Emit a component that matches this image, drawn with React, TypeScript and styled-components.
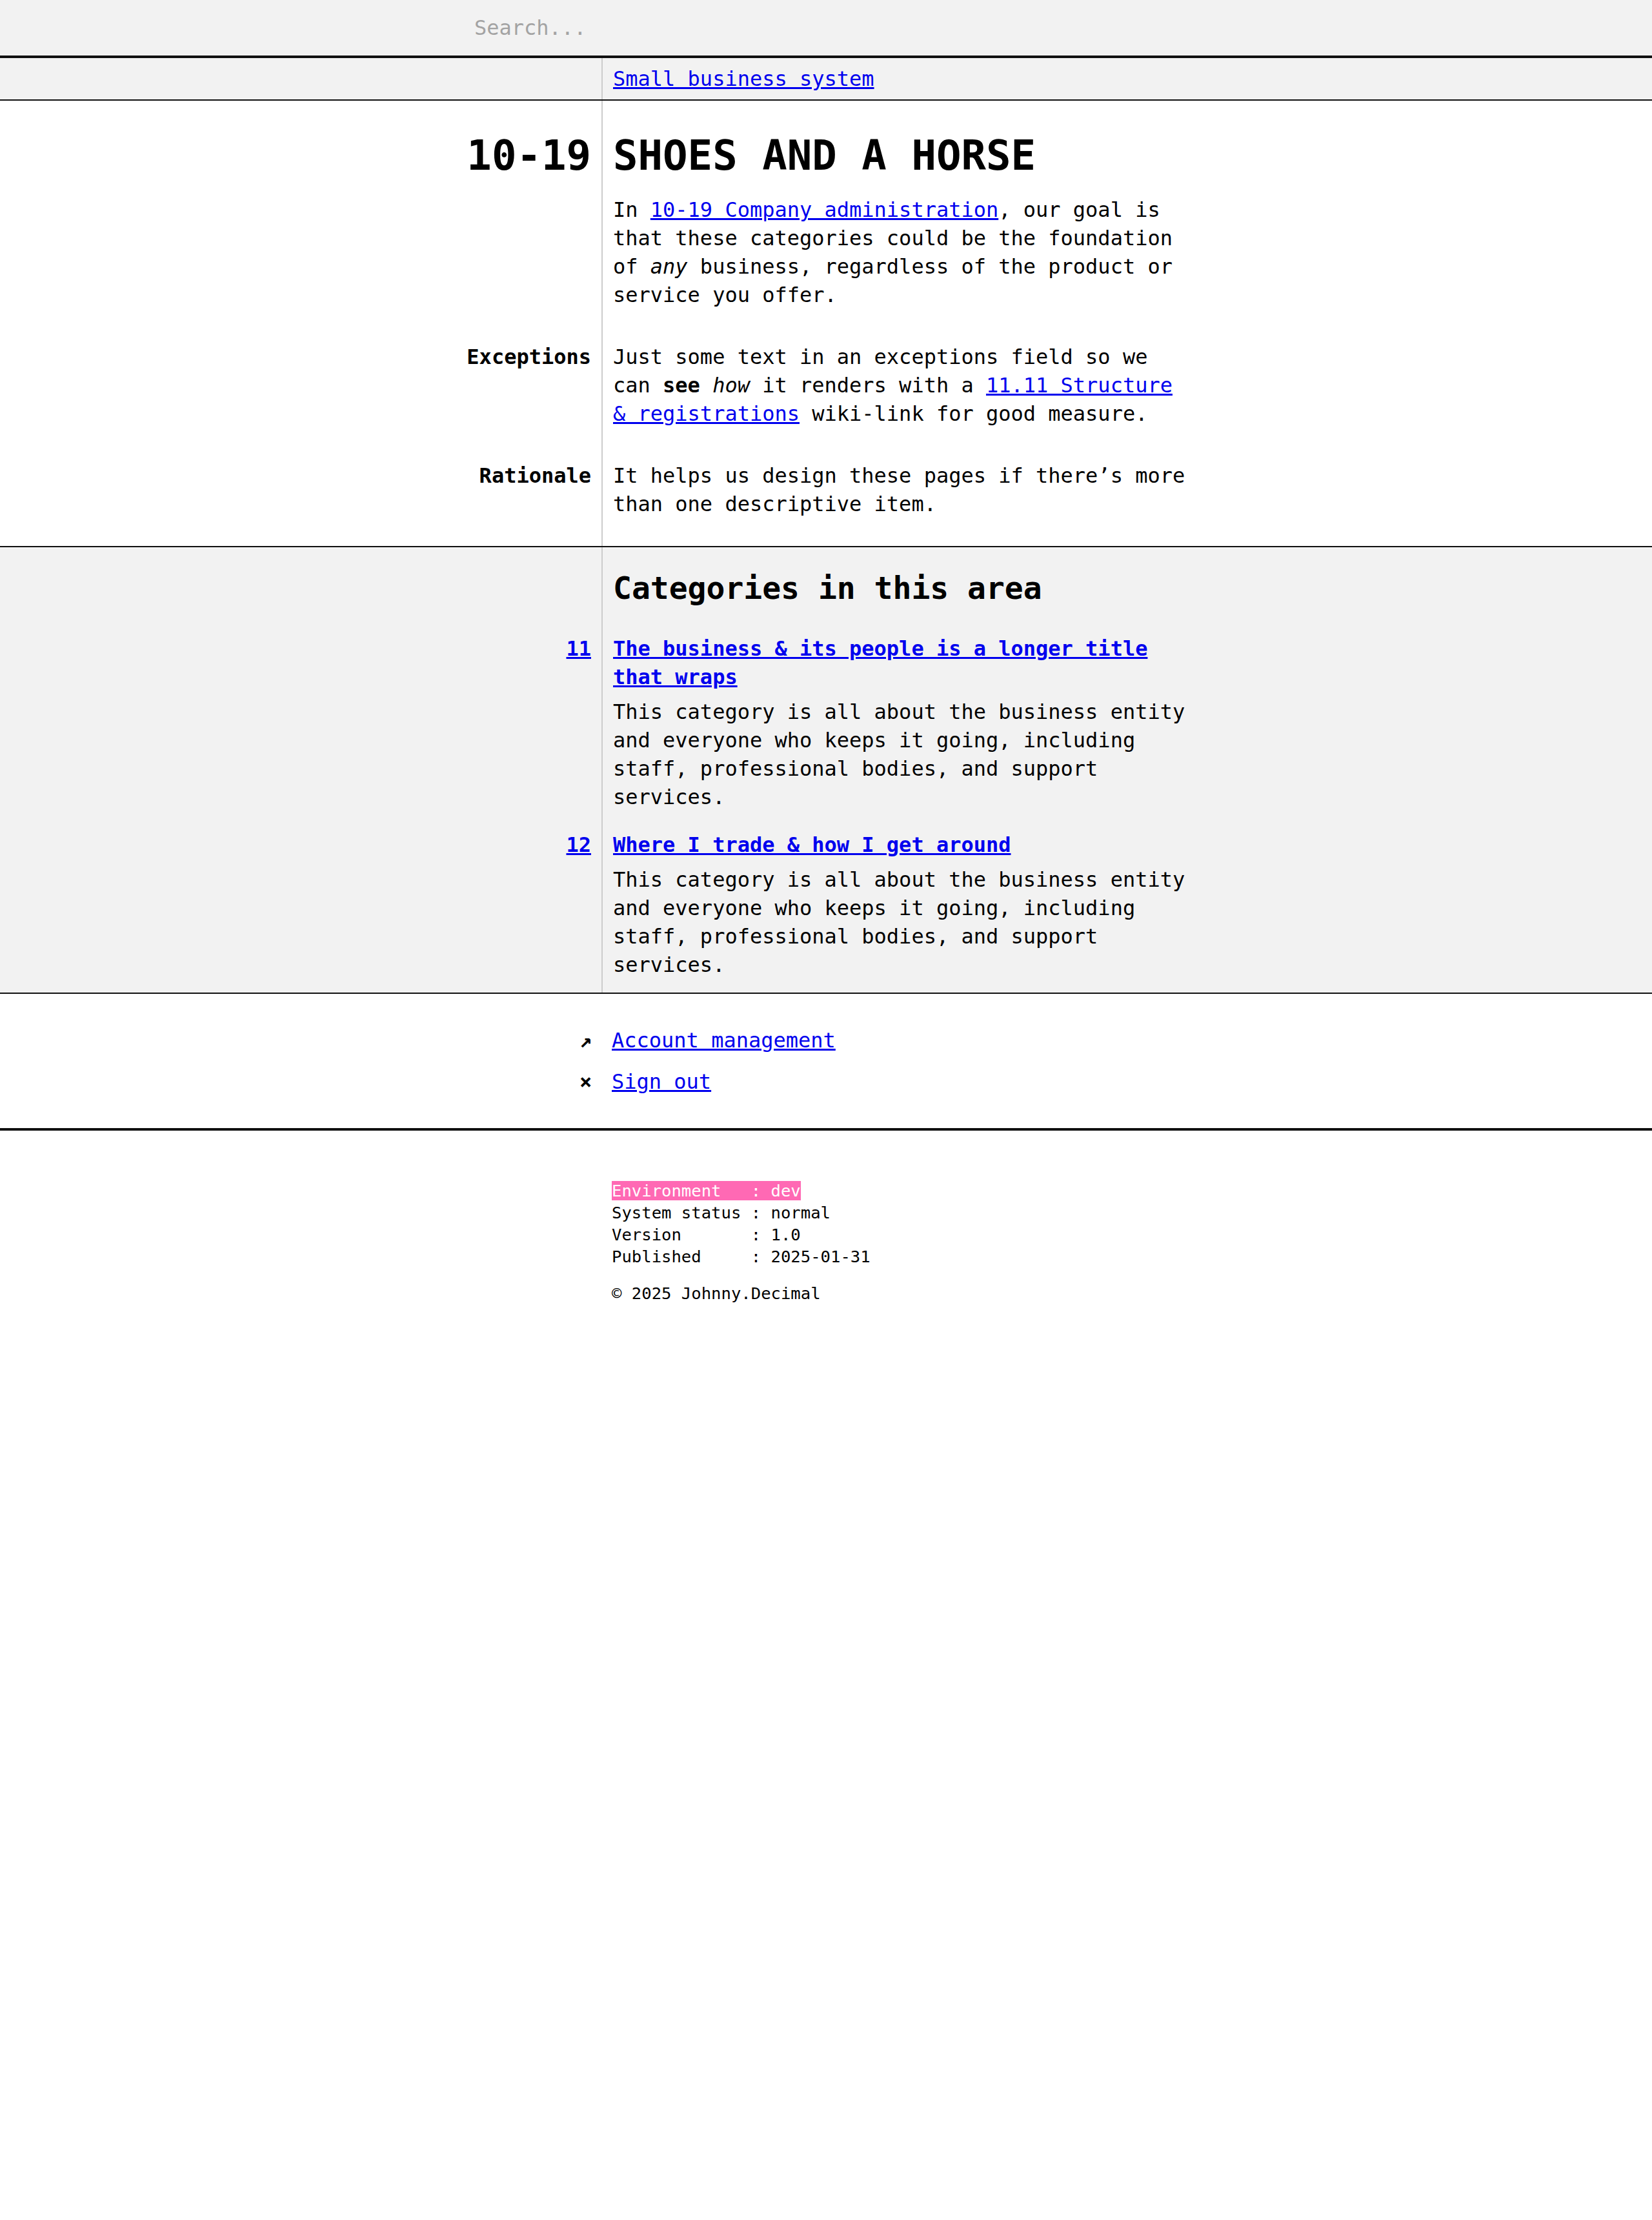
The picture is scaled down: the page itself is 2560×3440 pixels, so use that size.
import React from "react";
import styled, { createGlobalStyle } from "styled-components";

const GlobalStyle = createGlobalStyle`
  html, body {
    margin: 0;
    padding: 0;
    background: #ffffff;
  }
  body {
    font-family: "DejaVu Sans Mono", "Liberation Mono", monospace;
    font-size: 32px;
    line-height: 44px;
    color: #000000;
  }
  a {
    color: #0000ee;
  }
`;

const SearchBar = styled.header`
  display: flex;
  justify-content: center;
  height: 86px;
  background: #f2f2f2;
  border-bottom: 4px solid #111111;
`;

const SearchInput = styled.input`
  width: 1090px;
  height: 86px;
  margin: 0;
  padding: 0;
  border: 0;
  outline: none;
  background: transparent;
  font-family: inherit;
  font-size: 32px;
  color: #000000;
  &::placeholder {
    color: #a3a3a3;
  }
`;

const Band = styled.section<{
  $grey?: boolean;
  $pt: number;
  $pb: number;
  $gap: number;
}>`
  display: grid;
  grid-template-columns: 932px minmax(0, 1fr);
  row-gap: ${(p) => p.$gap}px;
  padding: ${(p) => p.$pt}px 0 ${(p) => p.$pb}px;
  background-color: ${(p) => (p.$grey ? "#f2f2f2" : "#ffffff")};
  background-image: linear-gradient(#cccccc, #cccccc);
  background-size: 2px 100%;
  background-position: 932px 0;
  background-repeat: no-repeat;
  border-bottom: 2px solid #111111;
`;

const Label = styled.div<{ $big?: boolean }>`
  padding-right: 16px;
  text-align: right;
  font-weight: 700;
  font-size: ${(p) => (p.$big ? "64px" : "32px")};
  line-height: ${(p) => (p.$big ? "76px" : "44px")};
`;

const Body = styled.div`
  padding-left: 18px;
  max-width: 900px;
`;

const PageTitle = styled.h1`
  margin: 0 0 24px;
  font-size: 64px;
  line-height: 76px;
  font-weight: 700;
`;

const SectionTitle = styled.h2<{ $after: number }>`
  margin: 0 0 ${(p) => p.$after}px;
  font-size: 48px;
  line-height: 58px;
  font-weight: 700;
`;

const Text = styled.p`
  margin: 0;
`;

const Lead = styled.p`
  margin: 10px 0 0;
`;

const StrongLink = styled.a`
  font-weight: 700;
`;

const NavBand = styled.nav`
  display: grid;
  grid-template-columns: 898px minmax(0, 1fr);
  padding: 50px 0;
  border-bottom: 4px solid #111111;
`;

const NavList = styled.ul`
  grid-column: 2;
  display: flex;
  flex-direction: column;
  gap: 20px;
  margin: 0;
  padding: 0;
  list-style: none;
`;

const NavItem = styled.li`
  display: flex;
`;

const Marker = styled.span`
  flex: none;
  width: 50px;
  font-weight: 700;
`;

const Colophon = styled.footer`
  display: grid;
  grid-template-columns: 948px minmax(0, 1fr);
  padding-top: 76px;
  font-size: 25.6px;
  line-height: 34px;
`;

const ColophonBody = styled.div`
  grid-column: 2;
`;

const Status = styled.pre`
  margin: 0;
  font-family: inherit;
  font-size: inherit;
  line-height: inherit;
`;

const Highlight = styled.span`
  background: #ff69b4;
  color: #ffffff;
`;

const Copyright = styled.p`
  margin: 23px 0 0;
`;

const categories = [
  {
    id: "11",
    title: "The business & its people is a longer title that wraps",
    text:
      "This category is all about the business entity and everyone who keeps it going, including staff, professional bodies, and support services.",
  },
  {
    id: "12",
    title: "Where I trade & how I get around",
    text:
      "This category is all about the business entity and everyone who keeps it going, including staff, professional bodies, and support services.",
  },
];

export default function App() {
  return (
    <>
      <GlobalStyle />
      <SearchBar>
        <SearchInput type="text" placeholder="Search..." />
      </SearchBar>

      <Band $grey $pt={10} $pb={10} $gap={0}>
        <Label />
        <Body>
          <a href="#">Small business system</a>
        </Body>
      </Band>

      <Band $pt={47} $pb={43} $gap={52}>
        <Label $big>10-19</Label>
        <Body>
          <PageTitle>SHOES AND A HORSE</PageTitle>
          <Text>
            In <a href="#">10-19 Company administration</a>, our goal is that
            these categories could be the foundation of <em>any</em> business,
            regardless of the product or service you offer.
          </Text>
        </Body>

        <Label>Exceptions</Label>
        <Body>
          <Text>
            Just some text in an exceptions field so we can <strong>see</strong>{" "}
            <em>how</em> it renders with a{" "}
            <a href="#">11.11 Structure &amp; registrations</a> wiki-link for
            good measure.
          </Text>
        </Body>

        <Label>Rationale</Label>
        <Body>
          <Text>
            It helps us design these pages if there’s more than one descriptive
            item.
          </Text>
        </Body>
      </Band>

      <Band $grey $pt={34} $pb={21} $gap={30}>
        <Label />
        <Body>
          <SectionTitle $after={13}>Categories in this area</SectionTitle>
        </Body>
        {categories.map((c) => (
          <React.Fragment key={c.id}>
            <Label>
              <a href="#">{c.id}</a>
            </Label>
            <Body>
              <StrongLink href="#">{c.title}</StrongLink>
              <Lead>{c.text}</Lead>
            </Body>
          </React.Fragment>
        ))}
      </Band>

      <NavBand>
        <NavList>
          <NavItem>
            <Marker>↗</Marker>
            <a href="#">Account management</a>
          </NavItem>
          <NavItem>
            <Marker>×</Marker>
            <a href="#">Sign out</a>
          </NavItem>
        </NavList>
      </NavBand>

      <Colophon>
        <ColophonBody>
          <Status>
            <Highlight>Environment   : dev</Highlight>
            {"\nSystem status : normal\nVersion       : 1.0\nPublished     : 2025-01-31"}
          </Status>
          <Copyright>© 2025 Johnny.Decimal</Copyright>
        </ColophonBody>
      </Colophon>
    </>
  );
}
